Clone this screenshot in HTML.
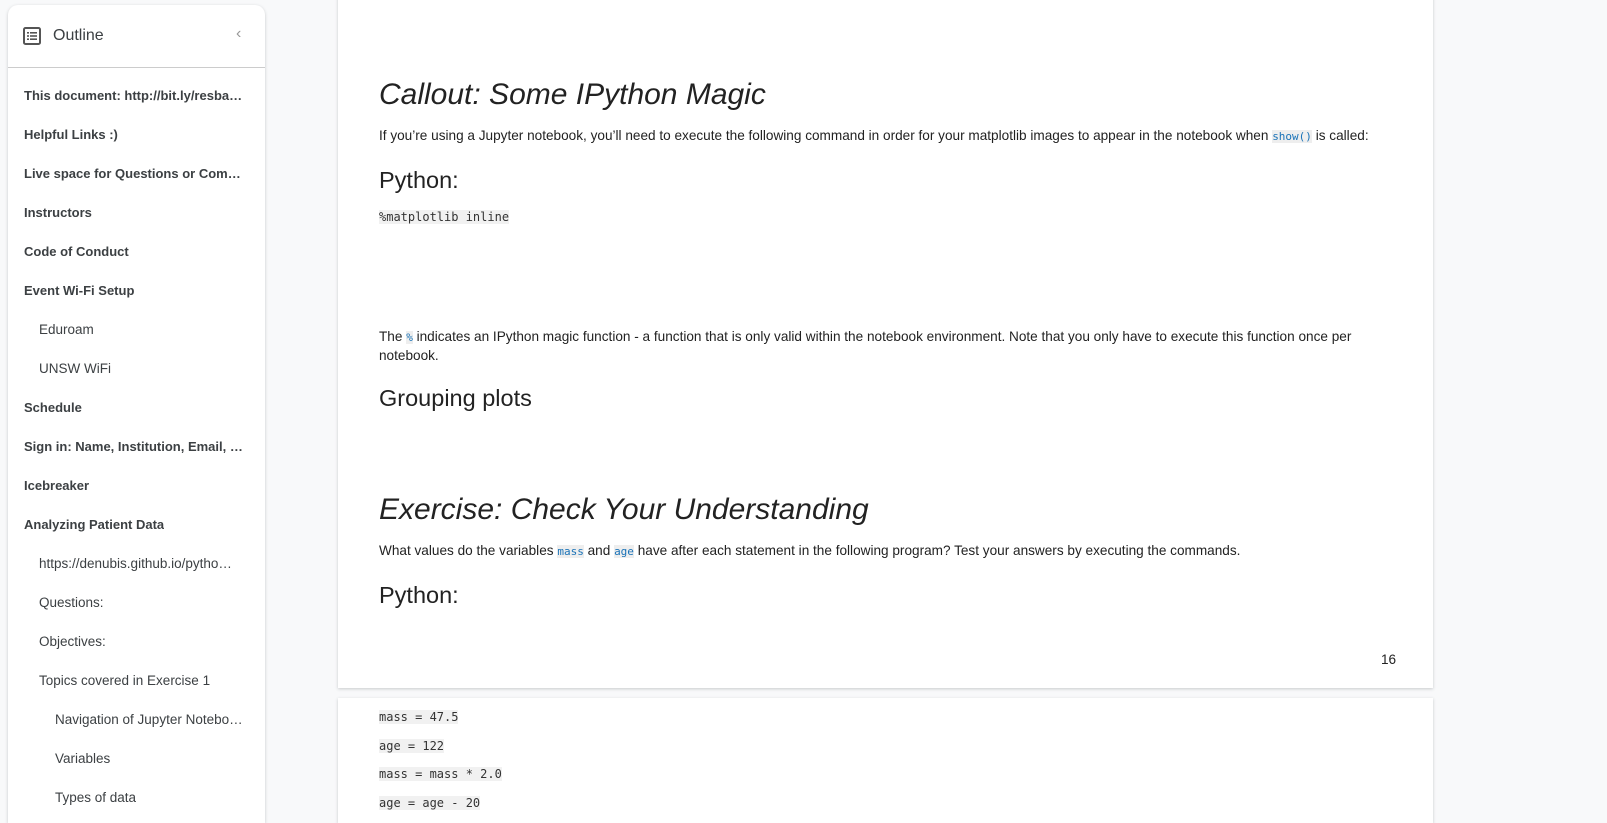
<!DOCTYPE html>
<html><head><meta charset="utf-8"><style>
*{margin:0;padding:0;box-sizing:border-box}
html{overflow:hidden;width:1607px;height:823px}
body{width:1607px;height:823px;overflow:hidden;background:#f8f9fa;font-family:"Liberation Sans",Arial,sans-serif;color:#222;position:relative}
.side{position:absolute;left:8px;top:5px;width:257px;height:818px;background:#fff;border-radius:10px 10px 0 0;box-shadow:0 1px 3px rgba(60,64,67,.25)}
.side .hd{height:63px;border-bottom:1px solid #ccc;position:relative}
.side .hd .t{position:absolute;left:45px;top:22px;font-size:16px;color:#3c4043}
.side .hd .ch{position:absolute;left:228px;top:20px;color:#999;font-size:16px}
.it{position:absolute;font-size:13.5px;color:#3c4043;white-space:nowrap;overflow:hidden;text-overflow:ellipsis;max-width:220px}
.b{font-weight:bold;font-size:13px}
.page{position:absolute;left:338px;width:1095px;background:#fff;box-shadow:0 1px 3px rgba(60,64,67,.25)}
.a{position:absolute;left:379px;white-space:nowrap}
.h1{font-size:30px;font-style:italic;color:#222}
.h2{font-size:23.5px;color:#222}
.p{font-size:13.6px;color:#222}
code{font-family:"DejaVu Sans Mono","Liberation Mono",monospace;font-size:12px;background:#f1f1f1;color:#333}
code.c{color:#1a73b8;font-size:11px;background:#eee}
</style></head><body>
<div class="side">
<div class="hd">
<svg style="position:absolute;left:15px;top:22px" width="18" height="18" viewBox="0 0 18 18"><rect x="1" y="1" width="16" height="16" rx="1.5" fill="none" stroke="#555" stroke-width="2"/><rect x="4" y="5" width="2" height="1.6" fill="#555"/><rect x="7" y="5" width="7" height="1.6" fill="#555"/><rect x="4" y="8.2" width="2" height="1.6" fill="#555"/><rect x="7" y="8.2" width="7" height="1.6" fill="#555"/><rect x="4" y="11.4" width="2" height="1.6" fill="#555"/><rect x="7" y="11.4" width="7" height="1.6" fill="#555"/></svg>
<div class="t">Outline</div><div class="ch">‹</div></div>
</div>
<div class="it b" style="left:24px;top:88px">This document: http://bit.ly/resba…</div>
<div class="it b" style="left:24px;top:127px">Helpful Links :)</div>
<div class="it b" style="left:24px;top:166px">Live space for Questions or Com…</div>
<div class="it b" style="left:24px;top:205px">Instructors</div>
<div class="it b" style="left:24px;top:244px">Code of Conduct</div>
<div class="it b" style="left:24px;top:283px">Event Wi-Fi Setup</div>
<div class="it" style="left:39px;top:322px">Eduroam</div>
<div class="it" style="left:39px;top:361px">UNSW WiFi</div>
<div class="it b" style="left:24px;top:400px">Schedule</div>
<div class="it b" style="left:24px;top:439px">Sign in: Name, Institution, Email, T…</div>
<div class="it b" style="left:24px;top:478px">Icebreaker</div>
<div class="it b" style="left:24px;top:517px">Analyzing Patient Data</div>
<div class="it" style="left:39px;top:556px;max-width:205px">https://denubis.github.io/pytho…</div>
<div class="it" style="left:39px;top:595px">Questions:</div>
<div class="it" style="left:39px;top:634px">Objectives:</div>
<div class="it" style="left:39px;top:673px">Topics covered in Exercise 1</div>
<div class="it" style="left:55px;top:712px;max-width:190px">Navigation of Jupyter Notebo…</div>
<div class="it" style="left:55px;top:751px">Variables</div>
<div class="it" style="left:55px;top:790px">Types of data</div>

<div class="page" style="top:-5px;height:693px"></div>
<div class="page" style="top:698px;height:125px"></div>
<div class="a h1" style="top:78px">Callout: Some IPython Magic</div>
<div class="a p" style="top:128px">If you’re using a Jupyter notebook, you’ll need to execute the following command in order for your matplotlib images to appear in the notebook when <code class="c">show()</code> is called:</div>
<div class="a h2" style="top:167px">Python:</div>
<div class="a" style="top:208px"><code>%matplotlib inline</code></div>
<div class="a p" style="top:328px;line-height:18px;white-space:normal;width:1000px">The <code class="c">%</code> indicates an IPython magic function - a function that is only valid within the notebook environment. Note that you only have to execute this function once per notebook.</div>
<div class="a h2" style="top:385px">Grouping plots</div>
<div class="a h1" style="top:493px">Exercise: Check Your Understanding</div>
<div class="a p" style="top:543px">What values do the variables <code class="c">mass</code> and <code class="c">age</code> have after each statement in the following program? Test your answers by executing the commands.</div>
<div class="a h2" style="top:582px">Python:</div>
<div class="a p" style="left:1381px;top:652px">16</div>
<div class="a" style="top:708px"><code>mass = 47.5</code></div>
<div class="a" style="top:737px"><code>age = 122</code></div>
<div class="a" style="top:765px"><code>mass = mass * 2.0</code></div>
<div class="a" style="top:794px"><code>age = age - 20</code></div>
</body></html>
